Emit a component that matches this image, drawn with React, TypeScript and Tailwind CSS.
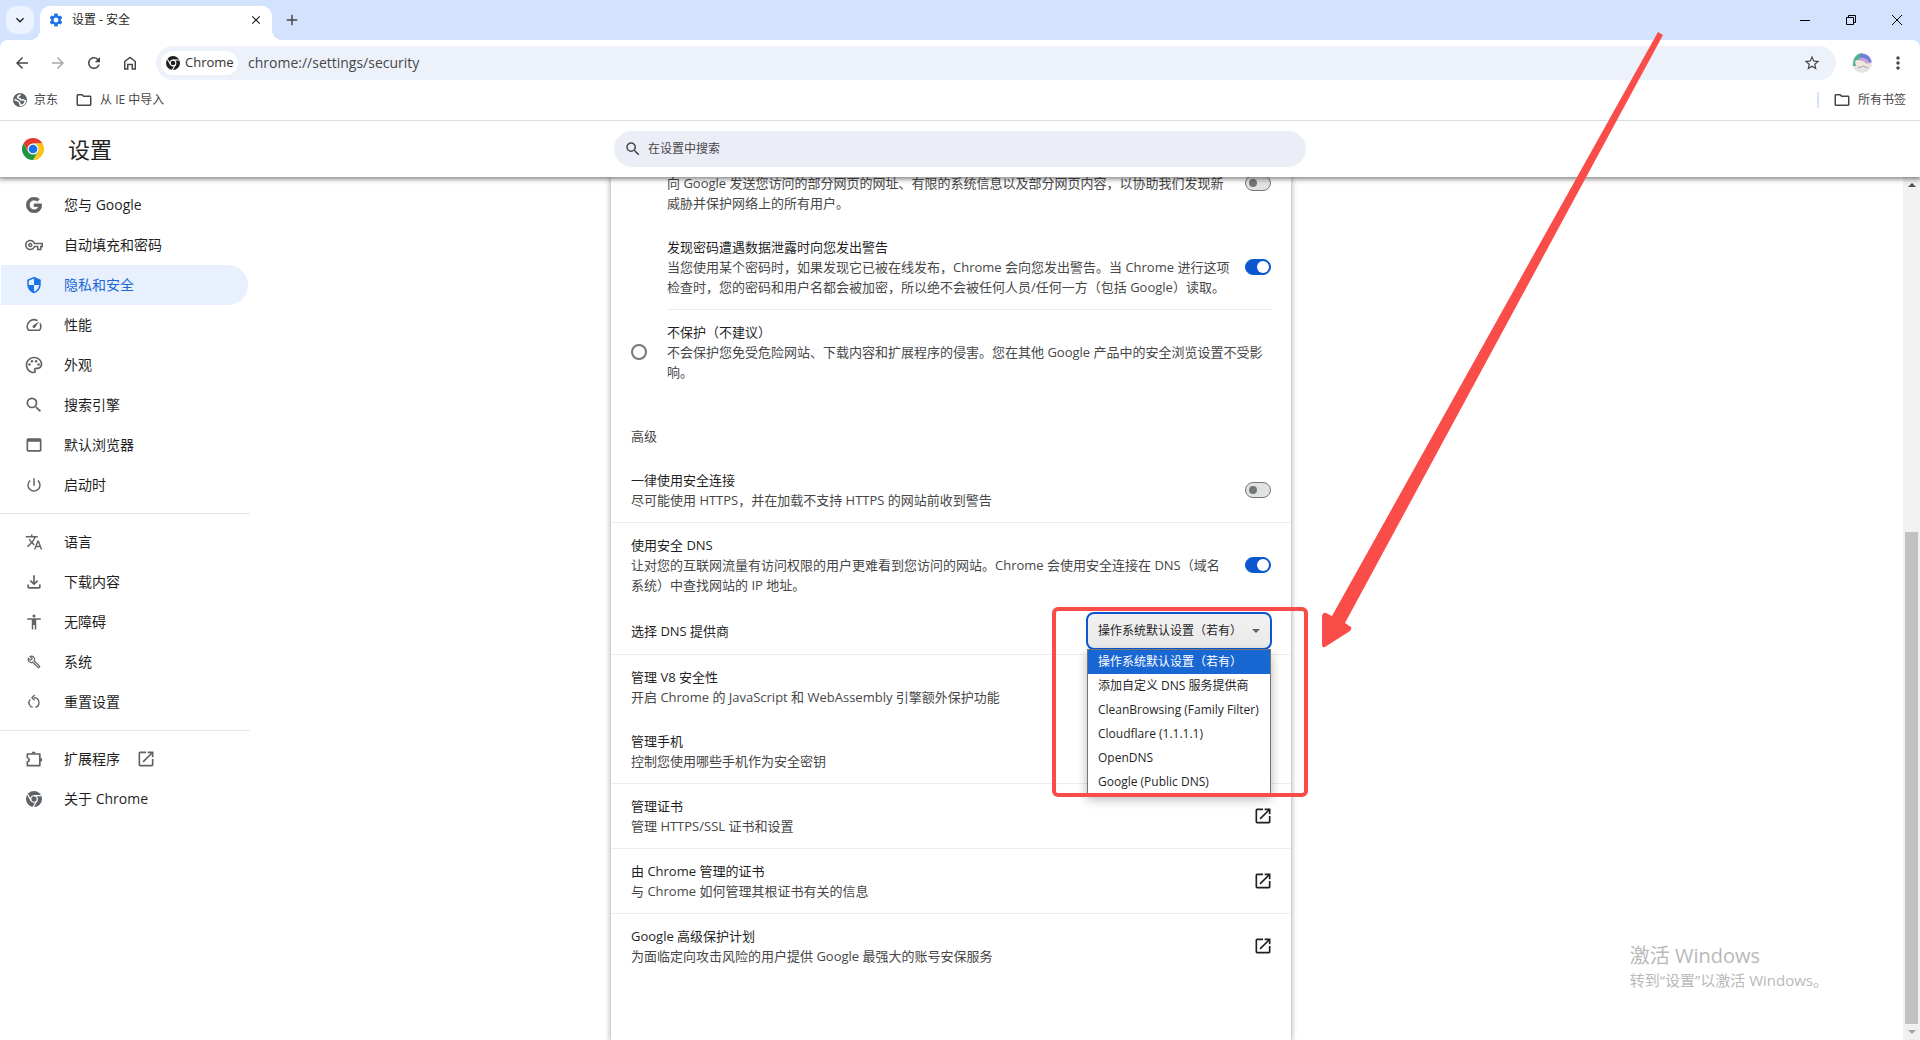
import type { ReactNode } from "react";
import {
  MdAccessibility,
  MdAdd,
  MdArrowBack,
  MdArrowForward,
  MdClose,
  MdExpandMore,
  MdMoreVert,
  MdOpenInNew,
  MdOutlineFolder,
  MdOutlinePalette,
  MdOutlineVpnKey,
  MdPowerSettingsNew,
  MdRefresh,
  MdSearch,
  MdSettings,
  MdStarBorder,
  MdTranslate,
  MdOutlineSpeed,
  MdOutlineBuild,
  MdOutlineFileDownload,
  MdSecurity,
  MdWebAsset,
} from "react-icons/md";
import { FaGoogle } from "react-icons/fa";

const DNS_PROVIDERS = [
  "操作系统默认设置（若有）",
  "添加自定义 DNS 服务提供商",
  "CleanBrowsing (Family Filter)",
  "Cloudflare (1.1.1.1)",
  "OpenDNS",
  "Google (Public DNS)",
];

function ChromeMono({ className }: { className?: string }) {
  return (
    <svg viewBox="0 0 24 24" className={className} fill="none" aria-hidden="true">
      <circle cx="12" cy="12" r="12" fill="currentColor" />
      <circle cx="12" cy="12" r="4.9" stroke="white" strokeWidth="1.8" />
      <path d="M12 7h11M7.7 14.5L2.3 5M16.3 14.5L10.8 24" stroke="white" strokeWidth="1.8" />
    </svg>
  );
}

function ChromeLogo({ className }: { className?: string }) {
  return (
    <svg viewBox="0 0 48 48" className={className} aria-hidden="true">
      <path d="M24 12h20.8A24 24 0 0 0 3.2 12l10.4 18z" fill="#e33b2e" />
      <path d="M34.4 30L24 48A24 24 0 0 0 44.8 12H24z" fill="#fcc31e" />
      <path d="M13.6 30L3.2 12A24 24 0 0 0 24 48l10.4-18z" fill="#229342" />
      <circle cx="24" cy="24" r="12" fill="white" />
      <circle cx="24" cy="24" r="9.5" fill="#1a73e8" />
    </svg>
  );
}

function HomeIcon({ className }: { className?: string }) {
  return (
    <svg viewBox="0 0 24 24" className={className} fill="none" stroke="currentColor" strokeWidth="2" aria-hidden="true">
      <path d="M5 10l7-5.500 7 5.500v10h-4v-6H9v6H5z" />
    </svg>
  );
}

function GlobeIcon({ className }: { className?: string }) {
  return (
    <svg viewBox="0 0 16 16" className={className} aria-hidden="true">
      <circle cx="8" cy="8" r="7" fill="#5f6368" />
      <path d="M8.500 2.500c-1 1.500-3 1-3 2.500s2.500 1 3 2.500 2-.5 3 .5 2 .5 2 0c0 3-2 5-5 5.500 0-1.500-1-1.500-1-3S5.500 9 2.500 7.500" fill="none" stroke="white" strokeWidth="1.500" />
    </svg>
  );
}

function PuzzleIcon({ className }: { className?: string }) {
  return (
    <svg viewBox="0 0 24 24" className={className} aria-hidden="true">
      <path d="M4 6h15v14H4v-4.500c3-.5 3-4.500 0-5z" fill="none" stroke="currentColor" strokeWidth="2" strokeLinejoin="round" />
      <path d="M9 5.500a2.500 2.500 0 0 1 5 0zM19.500 10.500a2.500 2.500 0 0 1 0 5z" fill="currentColor" />
    </svg>
  );
}

function ResetIcon({ className }: { className?: string }) {
  return (
    <svg viewBox="0 0 24 24" className={className} fill="none" stroke="currentColor" strokeWidth="2" aria-hidden="true">
      <path d="M12 5.500a7.500 7.500 0 0 1 2 14.700M10 20.200A7.500 7.500 0 0 1 6.200 8M13 1.500l-4 4 4 4" />
    </svg>
  );
}

function Avatar() {
  return (
    <svg viewBox="0 0 20 20" className="size-5" aria-hidden="true">
      <defs>
        <clipPath id="avatar">
          <circle cx="10" cy="10" r="10" />
        </clipPath>
      </defs>
      <g clipPath="url(#avatar)">
        <rect width="20" height="20" fill="#e4e4e6" />
        <path d="M1 13C1 5 5 0 10 0l3 3-6 5-2 5z" fill="#4fb493" />
        <path d="M8 1c6-1 10 2 12 8l-3 1c-2-4-5-5-9-5z" fill="#6f7fd8" />
        <path d="M7 5c5-1 9 1 11 5l-3 2c-1-3-4-5-8-4z" fill="#c3a3dc" />
        <path d="M3 9c1-3 4-2 6-1l5 3 3-1v3l-3 2-4-1-3-2-3 1z" fill="#f3e6d8" />
        <path d="M6 15l5-2 5 2" stroke="#a9a4a8" fill="none" />
      </g>
    </svg>
  );
}

function IconButton({ label, className = "", children }: { label: string; className?: string; children: ReactNode }) {
  return (
    <button aria-label={label} className={`flex items-center justify-center ${className}`}>
      {children}
    </button>
  );
}

function TabStrip() {
  return (
    <div className="flex h-10 shrink-0 items-end bg-[#d3e3fd]">
      <IconButton label="搜索标签页" className="mb-1.5 ml-1.5 size-7 rounded-[10px] bg-[#edf3fe]">
        <MdExpandMore className="size-4 text-[#1f1f1f]" />
      </IconButton>
      {/* active tab with the flared bottom corners */}
      <div className="relative ml-1.5 flex h-[34px] w-[232px] items-center rounded-t-[10px] bg-white pr-2 pl-2 pb-1.5">
        <span className="absolute bottom-0 -left-2.5 size-2.5 bg-[radial-gradient(circle_at_0_0,transparent_10px,white_10px)]" />
        <span className="absolute -right-2.5 bottom-0 size-2.5 bg-[radial-gradient(circle_at_100%_0,transparent_10px,white_10px)]" />
        <MdSettings className="size-4 text-[#1a73e8]" />
        <span className="ml-2 flex-1 text-xs text-[#1f1f1f]">设置 - 安全</span>
        <IconButton label="关闭" className="size-4">
          <MdClose className="size-3.5 text-[#1f1f1f]" />
        </IconButton>
      </div>
      <IconButton label="新标签页" className="mb-1.5 ml-1.5 size-7">
        <MdAdd className="size-[18px] text-[#474747]" />
      </IconButton>
      <div className="ml-auto flex h-10">
        <IconButton label="最小化" className="w-[46px]">
          <svg viewBox="0 0 10 10" className="size-2.5" stroke="black">
            <path d="M0 5.500h10" />
          </svg>
        </IconButton>
        <IconButton label="还原" className="w-[46px]">
          <svg viewBox="0 0 10 10" className="size-2.5" stroke="black" fill="none">
            <path d="M.5 2.500h7v7h-7zM2.500 2.500v-2h7v7h-2" />
          </svg>
        </IconButton>
        <IconButton label="关闭窗口" className="w-[46px]">
          <svg viewBox="0 0 10 10" className="size-2.5" stroke="black">
            <path d="M0 0l10 10M10 0L0 10" />
          </svg>
        </IconButton>
      </div>
    </div>
  );
}

function Toolbar() {
  return (
    <div className="bg-[#d3e3fd]">
      <div className="flex h-[46px] items-center rounded-t-lg bg-white pl-1 text-[#474747]">
        <IconButton label="返回" className="size-9">
          <MdArrowBack className="size-[18px]" />
        </IconButton>
        <IconButton label="前进" className="size-9 text-[#a8a8a8]">
          <MdArrowForward className="size-[18px]" />
        </IconButton>
        <IconButton label="重新加载" className="size-9">
          <MdRefresh className="size-[18px]" />
        </IconButton>
        <IconButton label="主页" className="size-9">
          <HomeIcon className="size-[18px]" />
        </IconButton>
        <div className="ml-2 flex h-[34px] flex-1 items-center rounded-full bg-[#edf1fa] pl-[5px]">
          <div className="flex h-6 items-center gap-[5px] rounded-full bg-white px-[5px]">
            <ChromeMono className="size-3.5 text-[#1f1f1f]" />
            <span className="w-12 text-[13px] text-[#303030]">Chrome</span>
          </div>
          <input
            aria-label="地址栏"
            defaultValue="chrome://settings/security"
            className="ml-2.5 min-w-0 flex-1 bg-transparent text-sm text-[#474747] outline-none"
          />
          <IconButton label="添加书签" className="mr-2 size-8">
            <MdStarBorder className="size-[18px]" />
          </IconButton>
        </div>
        <IconButton label="个人资料" className="ml-4 size-5">
          <Avatar />
        </IconButton>
        <IconButton label="更多" className="mr-3 ml-4 size-5">
          <MdMoreVert className="size-5" />
        </IconButton>
      </div>
    </div>
  );
}

function BookmarksBar() {
  return (
    <div className="relative z-20 flex h-[35px] shrink-0 items-center border-b border-[#dadcde] bg-white pb-1.5 text-xs text-[#474747]">
      <a href="#jd" className="ml-3 flex items-center gap-1.5">
        <GlobeIcon className="size-4" />
        京东
      </a>
      <a href="#ie" className="ml-[17px] flex items-center gap-[7px]">
        <MdOutlineFolder className="size-[18px]" />从 IE 中导入
      </a>
      <span className="ml-auto h-4 w-0.5 bg-[#d3e3fd]" />
      <a href="#all" className="mr-3.5 ml-3.5 flex items-center gap-[7px]">
        <MdOutlineFolder className="size-[18px]" />
        所有书签
      </a>
    </div>
  );
}

function SettingsHeader() {
  return (
    <header className="relative z-10 grid h-14 shrink-0 grid-cols-[1fr_692px_1fr] items-center bg-white shadow-[0_1px_5px_1px_rgba(0,0,0,0.5)]">
      <div className="flex items-center gap-6 pl-[22px]">
        <ChromeLogo className="size-[22px]" />
        <h1 className="text-[22px] text-[#1f1f1f]">设置</h1>
      </div>
      <label className="flex h-9 items-center gap-1.5 rounded-full bg-[#ebeef7] px-2.5">
        <MdSearch className="size-[18px] text-[#474747]" />
        <input
          aria-label="在设置中搜索"
          placeholder="在设置中搜索"
          className="flex-1 bg-transparent text-xs outline-none placeholder:text-[#474747]"
        />
      </label>
    </header>
  );
}

function NavItem({ icon, active, children }: { icon: ReactNode; active?: boolean; children: ReactNode }) {
  return (
    <a
      href="#nav"
      className={`ml-px flex h-10 w-[247px] items-center rounded-r-full pl-[23px] text-sm ${
        active ? "bg-[#e8f0fe] text-[#1967d2]" : "text-[#1f1f1f]"
      }`}
    >
      <span className={`mr-5 flex size-5 items-center justify-center ${active ? "text-[#1a73e8]" : "text-[#5f6368]"}`}>
        {icon}
      </span>
      {children}
    </a>
  );
}

function Sidebar() {
  return (
    <nav className="pt-2">
      <NavItem icon={<FaGoogle className="size-4 stroke-current stroke-[24]" />}>
        <span>您与 <span className="font-medium">Google</span></span>
      </NavItem>
      <NavItem icon={<MdOutlineVpnKey className="size-[18px]" />}>自动填充和密码</NavItem>
      <NavItem active icon={<MdSecurity className="size-[18px]" />}>隐私和安全</NavItem>
      <NavItem icon={<MdOutlineSpeed className="size-[18px]" />}>性能</NavItem>
      <NavItem icon={<MdOutlinePalette className="size-5" />}>外观</NavItem>
      <NavItem icon={<MdSearch className="size-5" />}>搜索引擎</NavItem>
      <NavItem icon={<MdWebAsset className="size-5" />}>默认浏览器</NavItem>
      <NavItem icon={<MdPowerSettingsNew className="size-[18px]" />}>启动时</NavItem>
      <hr className="my-2 w-[250px] border-[#e6e6e6]" />
      <NavItem icon={<MdTranslate className="size-[18px]" />}>语言</NavItem>
      <NavItem icon={<MdOutlineFileDownload className="size-5" />}>下载内容</NavItem>
      <NavItem icon={<MdAccessibility className="size-[18px]" />}>无障碍</NavItem>
      <NavItem icon={<MdOutlineBuild className="size-3.5" />}>系统</NavItem>
      <NavItem icon={<ResetIcon className="size-4" />}>重置设置</NavItem>
      <hr className="my-2 w-[250px] border-[#e6e6e6]" />
      <NavItem icon={<PuzzleIcon className="size-5" />}>
        扩展程序
        <MdOpenInNew className="ml-4 size-5 text-[#5f6368]" />
      </NavItem>
      <NavItem icon={<ChromeMono className="size-4" />}>
        <span>关于 <span className="font-medium">Chrome</span></span>
      </NavItem>
    </nav>
  );
}

function Toggle({ label, on }: { label: string; on?: boolean }) {
  return (
    <label className="flex h-4 w-[26px] shrink-0">
      <input type="checkbox" role="switch" aria-label={label} defaultChecked={on} className="peer sr-only" />
      <span className="flex h-4 w-full items-center rounded-full border border-[#747775] bg-[#e1e3e1] px-[3px] peer-checked:justify-end peer-checked:border-[#0b57d0] peer-checked:bg-[#0b57d0] peer-checked:px-px peer-checked:*:size-3 peer-checked:*:bg-white">
        <span className="size-2 rounded-full bg-[#747775]" />
      </span>
    </label>
  );
}

function RowText({ title, lines }: { title?: string; lines: string[] }) {
  return (
    <div className="flex-1 whitespace-nowrap">
      {title && <div className="text-[#1f1f1f]">{title}</div>}
      {lines.map((line) => (
        <div key={line} className="text-[#474747]">{line}</div>
      ))}
    </div>
  );
}

function Row({ title, lines, divider, children }: { title: string; lines: string[]; divider?: boolean; children?: ReactNode }) {
  return (
    <div className={`flex items-center px-5 py-3 ${divider ? "border-b border-[#ececec]" : ""}`}>
      <RowText title={title} lines={lines} />
      {children}
    </div>
  );
}

function LinkButton({ label }: { label: string }) {
  return (
    <IconButton label={label} className="-mr-0.5 size-5">
      <MdOpenInNew className="size-5 text-[#1f1f1f]" />
    </IconButton>
  );
}

function DnsSelect() {
  return (
    <div className="relative w-[186px]">
      <select
        id="dns"
        defaultValue={DNS_PROVIDERS[0]}
        className="h-[38px] w-full appearance-none rounded-lg border-2 border-[#0b57d0] bg-linear-to-b from-[#f2f2f2] to-[#e9e9e9] pl-2.5 text-xs text-[#1f1f1f] outline-none"
      >
        {DNS_PROVIDERS.map((p) => (
          <option key={p}>{p}</option>
        ))}
      </select>
      <span className="absolute top-[17px] right-3 border-x-4 border-t-4 border-x-transparent border-t-[#5f6368]" />
      {/* open list, cut off below the last visible option */}
      <ul role="listbox" className="absolute top-[37px] right-px left-px z-10 border border-b-0 border-[#767676] bg-white text-xs leading-6 text-[#1f1f1f] shadow-[0_5px_10px_rgba(0,0,0,0.3)]">
        {DNS_PROVIDERS.map((p, i) => (
          <li
            key={p}
            role="option"
            aria-selected={i === 0}
            className="h-6 pl-2.5 whitespace-nowrap aria-selected:bg-[#1967d2] aria-selected:text-white"
          >
            {p}
          </li>
        ))}
      </ul>
      {/* highlight frame */}
      <div className="absolute -top-[5px] -right-9 -left-[34px] z-20 h-[190px] rounded-md border-4 border-[#fa4c48]" />
    </div>
  );
}

function SecurityCard() {
  return (
    <main className="bg-white text-[13px] leading-5 shadow-[0_0_5px_1px_rgba(0,0,0,0.3)]">
      <div className="-mt-1 flex items-start pr-5 pl-14">
        <RowText
          lines={["向 Google 发送您访问的部分网页的网址、有限的系统信息以及部分网页内容，以协助我们发现新", "威胁并保护网络上的所有用户。"]}
        />
        <div className="pt-0.5">
          <Toggle label="协助改进安全性" />
        </div>
      </div>
      <div className="mt-6 mr-5 ml-14 flex items-center border-b border-[#ececec] pb-3">
        <RowText
          title="发现密码遭遇数据泄露时向您发出警告"
          lines={[
            "当您使用某个密码时，如果发现它已被在线发布，Chrome 会向您发出警告。当 Chrome 进行这项",
            "检查时，您的密码和用户名都会被加密，所以绝不会被任何人员/任何一方（包括 Google）读取。",
          ]}
        />
        <Toggle label="发现密码遭遇数据泄露时向您发出警告" on />
      </div>
      <label className="flex items-center py-3 pr-5 pl-5">
        <input type="radio" name="safe-browsing" className="mr-5 size-4 appearance-none rounded-full border-2 border-[#747775] checked:border-[#0b57d0]" />
        <RowText
          title="不保护（不建议）"
          lines={["不会保护您免受危险网站、下载内容和扩展程序的侵害。您在其他 Google 产品中的安全浏览设置不受影", "响。"]}
        />
      </label>
      <h2 className="px-5 pt-8 pb-3 text-[#474747]">高级</h2>
      <Row title="一律使用安全连接" lines={["尽可能使用 HTTPS，并在加载不支持 HTTPS 的网站前收到警告"]} divider>
        <Toggle label="一律使用安全连接" />
      </Row>
      <Row
        title="使用安全 DNS"
        lines={["让对您的互联网流量有访问权限的用户更难看到您访问的网站。Chrome 会使用安全连接在 DNS（域名", "系统）中查找网站的 IP 地址。"]}
      >
        <Toggle label="使用安全 DNS" on />
      </Row>
      <div className="flex h-12 items-center justify-between border-b border-[#ececec] pr-[19px] pl-5 text-[#1f1f1f]">
        <label htmlFor="dns">选择 DNS 提供商</label>
        <DnsSelect />
      </div>
      <Row title="管理 V8 安全性" lines={["开启 Chrome 的 JavaScript 和 WebAssembly 引擎额外保护功能"]} />
      <Row title="管理手机" lines={["控制您使用哪些手机作为安全密钥"]} divider />
      <Row title="管理证书" lines={["管理 HTTPS/SSL 证书和设置"]} divider>
        <LinkButton label="管理证书" />
      </Row>
      <Row title="由 Chrome 管理的证书" lines={["与 Chrome 如何管理其根证书有关的信息"]} divider>
        <LinkButton label="由 Chrome 管理的证书" />
      </Row>
      <Row title="Google 高级保护计划" lines={["为面临定向攻击风险的用户提供 Google 最强大的账号安保服务"]}>
        <LinkButton label="Google 高级保护计划" />
      </Row>
    </main>
  );
}

function Scrollbar() {
  return (
    <div className="flex w-[17px] shrink-0 flex-col items-center bg-[#f1f1f1]">
      <span className="my-1.5 border-x-4 border-b-4 border-x-transparent border-b-[#505050]" />
      <span className="mt-auto h-[57%] w-[13px] bg-[#c1c1c1]" />
      <span className="my-1.5 border-x-4 border-t-4 border-x-transparent border-t-[#a3a3a3]" />
    </div>
  );
}

export default function App() {
  return (
    <div className="relative flex h-screen flex-col overflow-hidden bg-white font-['Open_Sans','Noto_Sans_CJK_SC',sans-serif]">
      <TabStrip />
      <Toolbar />
      <BookmarksBar />
      <SettingsHeader />
      <div className="flex min-h-0 flex-1">
        <div className="grid flex-1 grid-cols-[1fr_680px_1fr] overflow-hidden pr-px">
          <Sidebar />
          <SecurityCard />
        </div>
        <Scrollbar />
      </div>

      {/* Windows activation watermark */}
      <div className="absolute right-[92px] bottom-[50px] text-[#b9b9b9]">
        <p className="text-xl leading-7">激活 Windows</p>
        <p className="text-[15px] leading-5">转到“设置”以激活 Windows。</p>
      </div>

      {/* arrow pointing at the provider list */}
      <svg viewBox="0 0 350 630" className="pointer-events-none absolute top-[25px] left-[1316px] z-30 h-[630px] w-[350px]" aria-hidden="true">
        <path
          d="M342 7l5 3L29 598l6 4q1 2-1 4L9 622q-3 1-3-3V591q1-4 4-3l6 3z"
          fill="#fa4c48"
        />
      </svg>
    </div>
  );
}
